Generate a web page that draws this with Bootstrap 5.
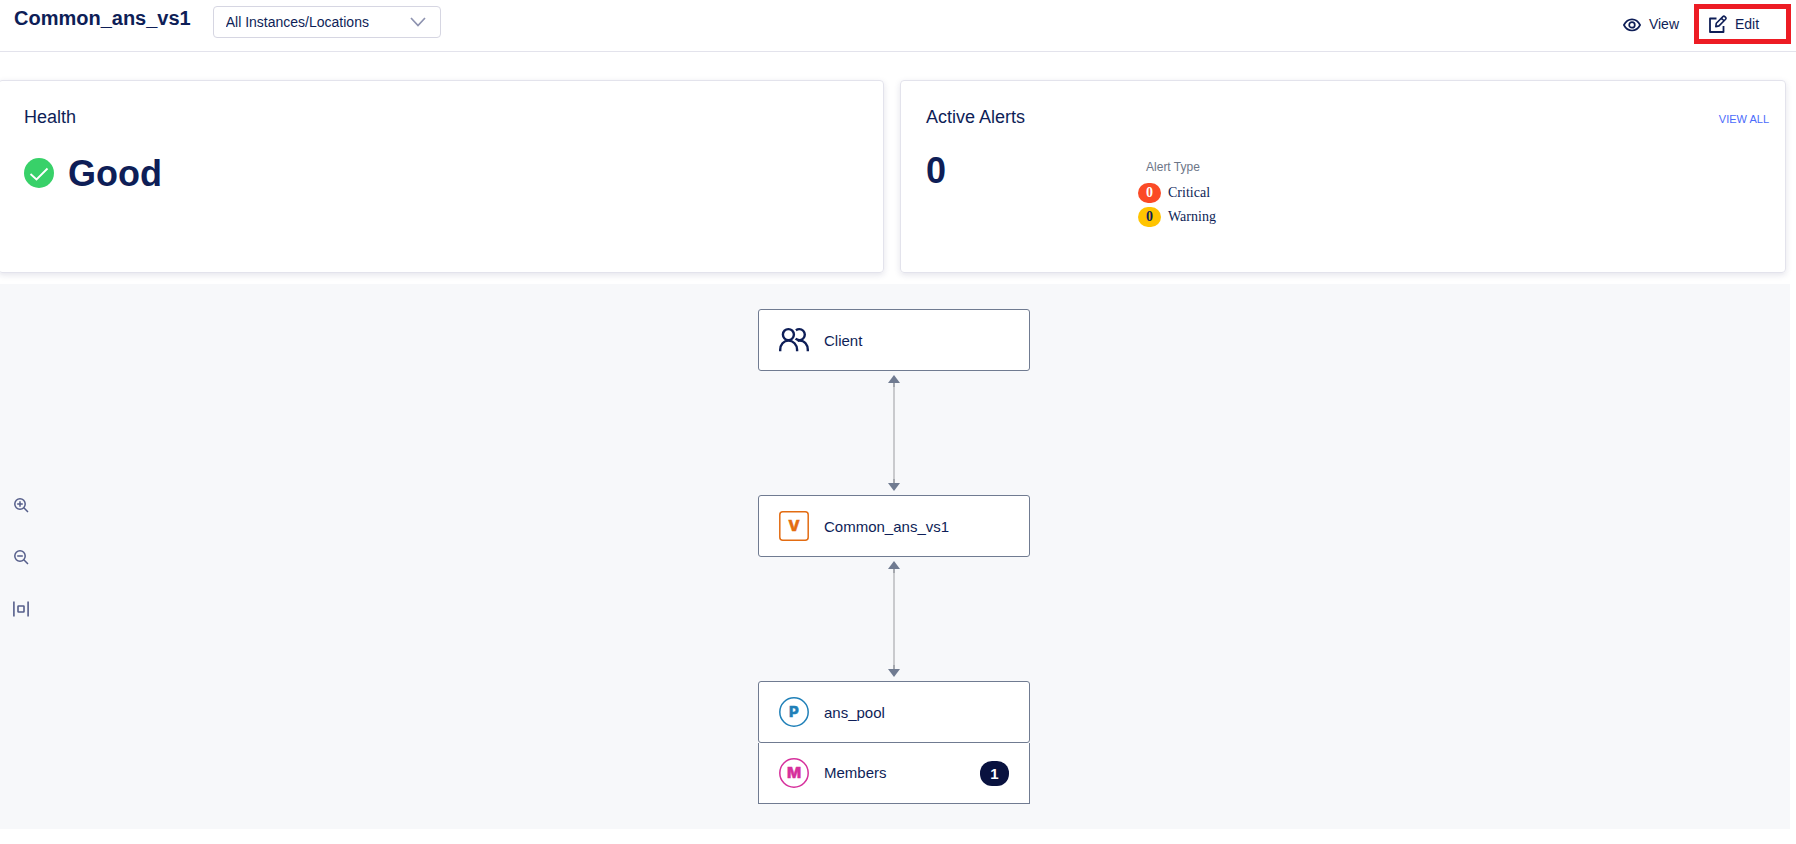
<!DOCTYPE html>
<html lang="en">
<head>
<meta charset="utf-8">
<meta name="viewport" content="width=device-width, initial-scale=1">
<title>Common_ans_vs1</title>
<link href="https://cdn.jsdelivr.net/npm/bootstrap@5.3.0/dist/css/bootstrap.min.css" rel="stylesheet">
<style>
  :root { --ink: #0e1e57; --line: #e3e3ec; --node: #707b91; }
  body { font-family: "Liberation Sans", Arial, sans-serif; font-size: 14px; line-height: 20px; color: var(--ink); background: #fff; }
  .topbar { height: 52px; border-bottom: 1px solid var(--line); padding: 4px 5px 0 14px; }
  .topbar h1 { font-size: 20px; line-height: 24px; font-weight: 700; margin: 2px 22px 0 0; }
  .scope-select { width: 228px; height: 32px; margin-top: 2px; padding: 0 36px 0 12px; font-size: 14px; color: var(--ink); border: 1px solid #d6d6e2; border-radius: 4px;
    background-image: url("data:image/svg+xml,%3Csvg xmlns='http://www.w3.org/2000/svg' viewBox='0 0 16 16' fill='none' stroke='%238e93b0' stroke-width='1.7'%3E%3Cpath d='M1 4l7 7.500 7-7.500'/%3E%3C/svg%3E"); background-position: right 14px center; background-size: 16px 16px; }
  .actions { gap: 15px; }
  .action { background: none; border: 0; padding: 0; color: var(--ink); }
  .action-marked { width: 97px; height: 40px; border: 5px solid #ed1c24; padding-left: 10px; }
  .panels { margin: 28px 10px 0 -2px; gap: 16px; }
  .panel { flex: 1 1 0; height: 193px; border: 1px solid var(--line); border-radius: 4px; box-shadow: 0 2px 6px rgba(30, 30, 90, .12); padding: 24px 16px 0 25px; }
  .panel h2 { font-size: 18px; line-height: 24px; font-weight: 400; }
  .figure-value { font-size: 36px; line-height: 40px; font-weight: 700; padding-top: 2px; }
  .health-status { margin-top: 23px; gap: 14px; }
  .view-all { font-size: 11px; color: #4b6bfb; text-decoration: none; margin-top: 4px; }
  .alert-types { padding-left: 192px; padding-top: 10px; }
  .alert-title { font-size: 12px; line-height: 16px; color: #6d7688; padding-left: 8px; }
  .alert-line { font-family: "Liberation Serif", "Times New Roman", serif; gap: 7px; }
  .count { width: 23px; height: 20px; border-radius: 10px; font-size: 14px; font-weight: 700; text-align: center; line-height: 20px; }
  .count-critical { background: #fb4a26; color: #fff; }
  .count-warning { background: #ffc400; color: var(--ink); }
  .topology { display: grid; grid-template-columns: 1fr 272px 1fr; align-items: center; background: #f7f8fa; margin: 11px 6px 0 0; padding: 25px 2px 25px 0; }
  .tools { padding-left: 13px; gap: 36px; }
  .tools button { width: 16px; height: 16px; padding: 0; border: 0; background: none; color: #555e8a; display: block; }
  .tools svg, .node svg, .action svg, .wire { display: block; flex: none; }
  .node { height: 62px; background: #fff; border: 1px solid var(--node); border-radius: 3px; padding: 0 20px; gap: 15px; font-size: 15px; }
  .node-label { padding-top: 2px; }
  .node + .node { height: 61px; border-top: 0; border-radius: 0; }
  .node + .node .node-label { padding-top: 0; }
  .node svg text { font-family: Inter, sans-serif; font-weight: 800; font-size: 15px; text-anchor: middle; stroke-width: .5; stroke: currentColor; fill: currentColor; }
  .pill { background: #09123f; color: #fff; font-weight: 700; width: 29px; height: 25px; line-height: 25px; border-radius: 12px; text-align: center; }
  .wire { margin: 4px auto; }
</style>
</head>
<body>
<header class="topbar d-flex align-items-start">
  <h1>Common_ans_vs1</h1>
  <select class="form-select scope-select" aria-label="Instances and locations"><option>All Instances/Locations</option></select>
  <div class="actions d-flex align-items-center ms-auto">
    <button type="button" class="action d-flex align-items-center gap-2">
      <svg width="18" height="18" viewBox="0 0 18 18" fill="none" stroke="currentColor" stroke-width="1.700"><path d="M.9 10C2.800 6.200 5.500 4.300 9 4.300s6.200 1.900 8.100 5.700c-1.900 3.700-4.600 5.500-8.100 5.500s-6.200-1.800-8.100-5.500z"/><circle cx="9" cy="9.900" r="2.800"/></svg>
      <span>View</span>
    </button>
    <button type="button" class="action action-marked d-flex align-items-center gap-2">
      <svg width="18" height="18" viewBox="0 0 18 18" fill="none" stroke="currentColor" stroke-width="1.800" stroke-linejoin="round"><path d="M7.500 3.500H1V17h13.500v-6"/><path d="M6.800 11.600l.5-3.400L13.900 1.600c.6-.6 1.300-.6 1.900 0l.8.8c.6.600.6 1.300 0 1.900L10 10.900zM12.400 3.200l2.600 2.600" stroke-width="1.600"/></svg>
      <span>Edit</span>
    </button>
  </div>
</header>

<main>
  <div class="panels d-flex">
    <section class="panel">
      <h2 class="mb-0">Health</h2>
      <div class="health-status d-flex align-items-center">
        <svg width="30" height="30" viewBox="0 0 30 30" aria-hidden="true"><circle cx="15" cy="15" r="15" fill="#38d169"/><path d="M6.500 16l6 5.500L23.500 10.500" fill="none" stroke="#fff" stroke-width="1.800"/></svg>
        <span class="figure-value">Good</span>
      </div>
    </section>
    <section class="panel">
      <div class="d-flex justify-content-between">
        <h2 class="mb-0">Active Alerts</h2>
        <a class="view-all" href="#">VIEW ALL</a>
      </div>
      <div class="d-flex align-items-start mt-3 pt-1">
        <span class="figure-value">0</span>
        <div class="alert-types">
          <div class="alert-title mb-2">Alert Type</div>
          <div class="alert-line d-flex mb-1"><span class="count count-critical">0</span><span>Critical</span></div>
          <div class="alert-line d-flex"><span class="count count-warning">0</span><span>Warning</span></div>
        </div>
      </div>
    </section>
  </div>

  <div class="topology">
    <div class="tools d-flex flex-column">
      <button type="button" aria-label="Zoom in"><svg width="16" height="16" viewBox="0 0 16 16" fill="none" stroke="currentColor" stroke-width="1.500"><circle cx="7" cy="7" r="5.200"/><path d="M10.800 10.800l4.200 4.200M4.200 7h5.600M7 4.200v5.600"/></svg></button>
      <button type="button" aria-label="Zoom out"><svg width="16" height="16" viewBox="0 0 16 16" fill="none" stroke="currentColor" stroke-width="1.500"><circle cx="7" cy="7" r="5.200"/><path d="M10.800 10.800l4.200 4.200M4.200 7h5.600"/></svg></button>
      <button type="button" aria-label="Fit to width"><svg width="16" height="16" viewBox="0 0 16 16" fill="none" stroke="currentColor" stroke-width="1.600"><path d="M.9.500v15M15.100.500v15"/><rect x="5" y="5" width="6" height="6" rx=".5"/></svg></button>
    </div>
    <div>
      <div class="node d-flex align-items-center">
        <svg width="30" height="30" viewBox="0 0 30 30" fill="none" stroke="#0e1e57" stroke-width="2.400"><circle cx="9.400" cy="9.600" r="5.500"/><path d="M1.200 26.300v-1.500c0-5.300 3.500-9.200 8.200-9.200s8.700 3.900 8.700 9.200v1.500"/><path d="M16.900 5.200c1-.7 2.100-1.100 3.400-1.100 3.100 0 5.500 2.500 5.500 5.500s-2.400 5.500-5.500 5.500c-1.400 0-2.700-.5-3.700-1.400"/><path d="M18.500 16c.7-.3 1.400-.4 2.200-.4 4.800 0 8.100 3.900 8.100 9.200v1.500"/></svg>
        <span class="node-label">Client</span>
      </div>
      <svg class="wire" width="12" height="116" viewBox="0 0 12 116"><path d="M6 6v104" stroke="#c9cacd" stroke-width="2"/><path d="M6 6v6M6 104v6" stroke="#a5a8ae" stroke-width="2"/><path d="M6 0l6 8H0zM6 116l6-8H0z" fill="#707b91"/></svg>
      <div class="node d-flex align-items-center">
        <svg width="30" height="30" viewBox="0 0 30 30" color="#e36c12"><rect x=".8" y=".8" width="28.400" height="28.400" rx="3" fill="#fff" stroke="#e36c12" stroke-width="1.500"/><text x="15" y="20">V</text></svg>
        <span class="node-label">Common_ans_vs1</span>
      </div>
      <svg class="wire" width="12" height="116" viewBox="0 0 12 116"><path d="M6 6v104" stroke="#c9cacd" stroke-width="2"/><path d="M6 6v6M6 104v6" stroke="#a5a8ae" stroke-width="2"/><path d="M6 0l6 8H0zM6 116l6-8H0z" fill="#707b91"/></svg>
      <div class="node d-flex align-items-center">
        <svg width="30" height="30" viewBox="0 0 30 30" color="#2080b8"><circle cx="15" cy="15" r="14.200" fill="#fff" stroke="#2080b8" stroke-width="1.500"/><text x="15" y="20">P</text></svg>
        <span class="node-label">ans_pool</span>
      </div>
      <div class="node d-flex align-items-center">
        <svg width="30" height="30" viewBox="0 0 30 30" color="#d6309c"><circle cx="15" cy="15" r="14.200" fill="#fff" stroke="#d6309c" stroke-width="1.500"/><text x="15" y="20">M</text></svg>
        <span class="node-label">Members</span>
        <span class="pill ms-auto">1</span>
      </div>
    </div>
  </div>
</main>
<script src="https://cdn.jsdelivr.net/npm/bootstrap@5.3.0/dist/js/bootstrap.bundle.min.js"></script>
</body>
</html>
